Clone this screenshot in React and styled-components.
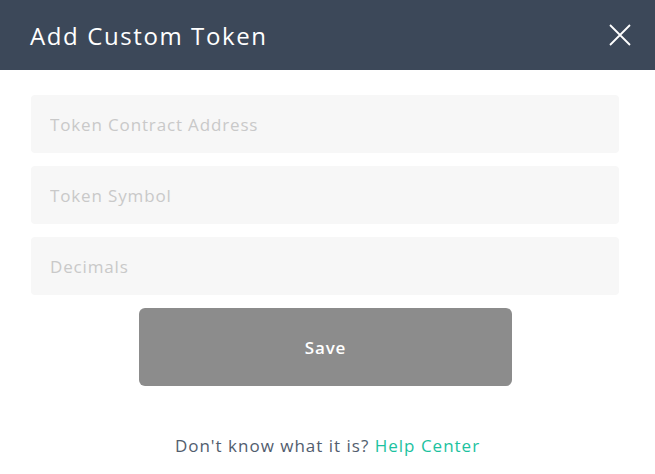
import React from "react";
import styled, { createGlobalStyle } from "styled-components";

const Global = createGlobalStyle`
  html, body { margin: 0; padding: 0; background: #ffffff; }
  body { font-family: "Open Sans", "DejaVu Sans", sans-serif; }
  * { box-sizing: border-box; }
`;

const Modal = styled.div`
  width: 655px;
  height: 474px;
  background: #ffffff;
  display: flex;
  flex-direction: column;
`;

const Header = styled.header`
  height: 70px;
  background: #3c4859;
  display: flex;
  align-items: center;
  justify-content: space-between;
  padding: 0 24px 0 30px;
`;

const Title = styled.h1`
  margin: 0;
  color: #ffffff;
  font-size: 24px;
  font-weight: 400;
  letter-spacing: 1.6px;
`;

const CloseButton = styled.button`
  border: 0;
  background: transparent;
  padding: 0;
  width: 22px;
  height: 22px;
  display: flex;
  cursor: pointer;
`;

const Body = styled.div`
  display: flex;
  flex-direction: column;
  padding: 25px 36px 0 31px;
  gap: 13px;
`;

const Input = styled.input`
  height: 58px;
  width: 100%;
  border: 0;
  border-radius: 4px;
  background: #f7f7f7;
  padding: 0 19px;
  font-family: inherit;
  font-size: 17px;
  letter-spacing: 0.85px;
  color: #333;
  outline: none;
  &::placeholder { color: #c9c9c9; }
`;

const SaveButton = styled.button`
  align-self: flex-start;
  margin-left: 108px;
  width: 373px;
  height: 78px;
  border: 0;
  border-radius: 6px;
  background: #8c8c8c;
  color: #ffffff;
  font-family: inherit;
  font-weight: 600;
  font-size: 17px;
  letter-spacing: 0.8px;
`;

const Footer = styled.p`
  margin: 48px 0 0;
  text-align: center;
  font-size: 17px;
  letter-spacing: 1px;
  color: #525d6e;
`;

const Link = styled.a`
  color: #1cc2a0;
  text-decoration: none;
`;

export default function App() {
  return (
    <Modal>
      <Global />
      <Header>
        <Title>Add Custom Token</Title>
        <CloseButton aria-label="Close">
          <svg width="22" height="22" viewBox="0 0 22 22">
            <path d="M1 1 L21 21 M21 1 L1 21" stroke="#ffffff" strokeWidth="1.8" fill="none" />
          </svg>
        </CloseButton>
      </Header>
      <Body>
        <Input placeholder="Token Contract Address" />
        <Input placeholder="Token Symbol" />
        <Input placeholder="Decimals" />
        <SaveButton>Save</SaveButton>
      </Body>
      <Footer>
        Don't know what it is? <Link href="#">Help Center</Link>
      </Footer>
    </Modal>
  );
}
